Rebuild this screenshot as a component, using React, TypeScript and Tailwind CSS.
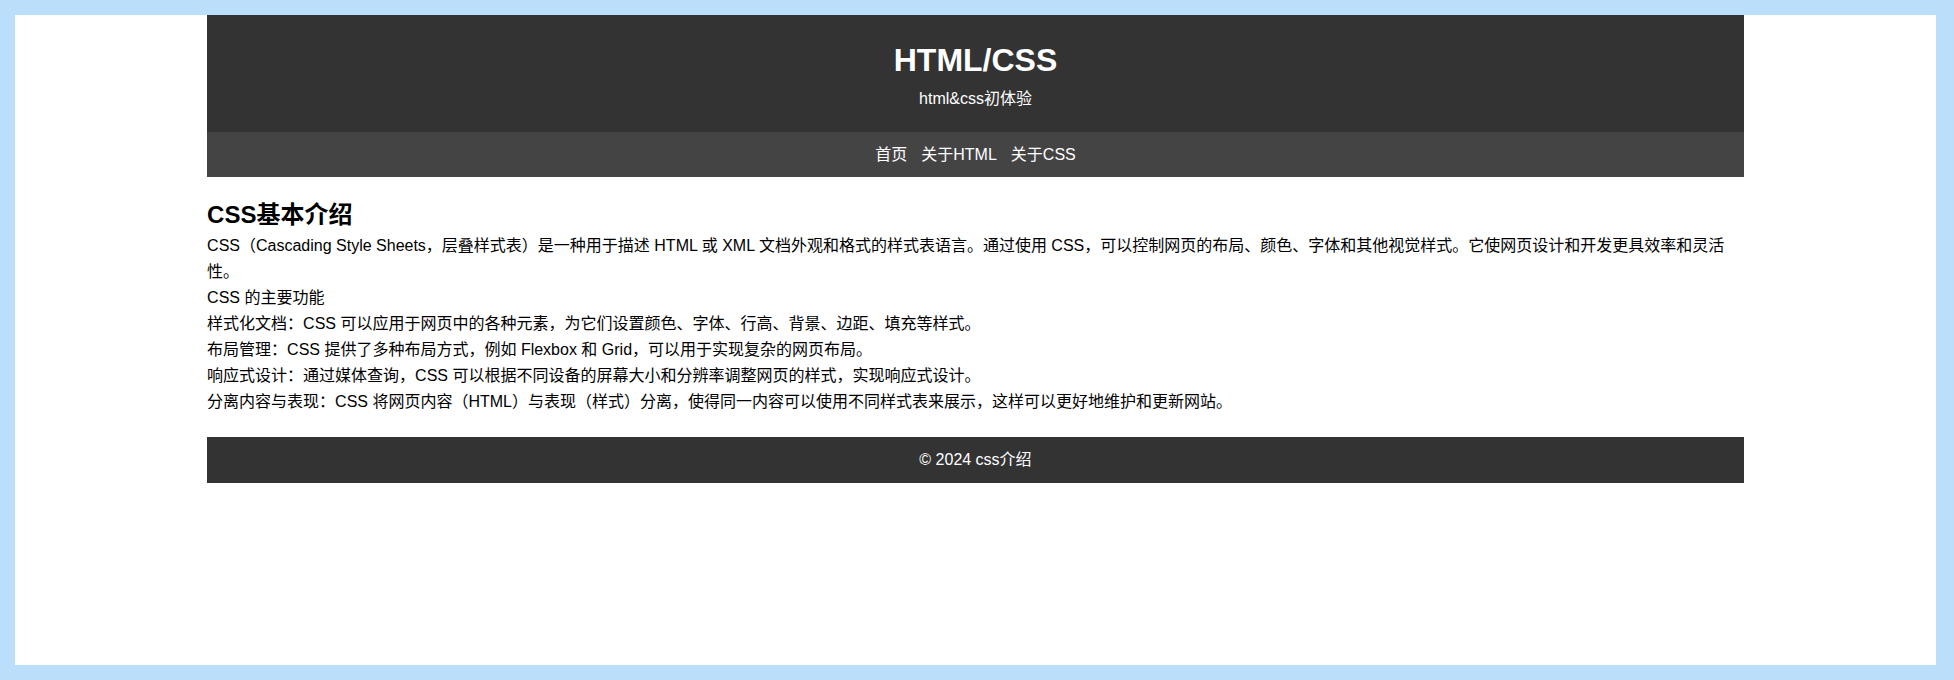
import React from 'react';

const features = [
  '样式化文档：CSS 可以应用于网页中的各种元素，为它们设置颜色、字体、行高、背景、边距、填充等样式。',
  '布局管理：CSS 提供了多种布局方式，例如 Flexbox 和 Grid，可以用于实现复杂的网页布局。',
  '响应式设计：通过媒体查询，CSS 可以根据不同设备的屏幕大小和分辨率调整网页的样式，实现响应式设计。',
  '分离内容与表现：CSS 将网页内容（HTML）与表现（样式）分离，使得同一内容可以使用不同样式表来展示，这样可以更好地维护和更新网站。',
];

const App = () => {
  return (
    <div className="h-[680px] bg-[#bbdefb] pt-[15px] pl-[15px] pr-[18px] pb-[15px] font-[Liberation_Sans,Noto_Sans_CJK_SC,sans-serif] text-black">
      <div className="h-full bg-white">
        <div className="w-[80%] mx-auto">
          <header className="bg-[#333333] text-white text-center h-[117px] pt-[26px]">
            <h1 className="text-[32px] font-bold leading-[38px]">HTML/CSS</h1>
            <p className="text-[16px] mt-[8px]">html&amp;css初体验</p>
          </header>
          <nav className="bg-[#444444] h-[45px] flex items-center justify-center gap-[14px] text-white text-[16px]">
            <a>首页</a>
            <a>关于HTML</a>
            <a>关于CSS</a>
          </nav>
          <main className="pt-[22px] pb-[22px] text-[16px] leading-[26px]">
            <h2 className="text-[24px] font-bold leading-[32px] mb-[2px]">CSS基本介绍</h2>
            <p>
              CSS（Cascading Style Sheets，层叠样式表）是一种用于描述 HTML 或 XML 文档外观和格式的样式表语言。通过使用 CSS，可以控制网页的布局、颜色、字体和其他视觉样式。它使网页设计和开发更具效率和灵活性。
            </p>
            <p>CSS 的主要功能</p>
            {features.map((f) => (
              <p key={f}>{f}</p>
            ))}
          </main>
          <footer className="bg-[#333333] h-[46px] flex items-center justify-center text-white text-[16px]">
            © 2024 css介绍
          </footer>
        </div>
      </div>
    </div>
  );
};

export default App;
